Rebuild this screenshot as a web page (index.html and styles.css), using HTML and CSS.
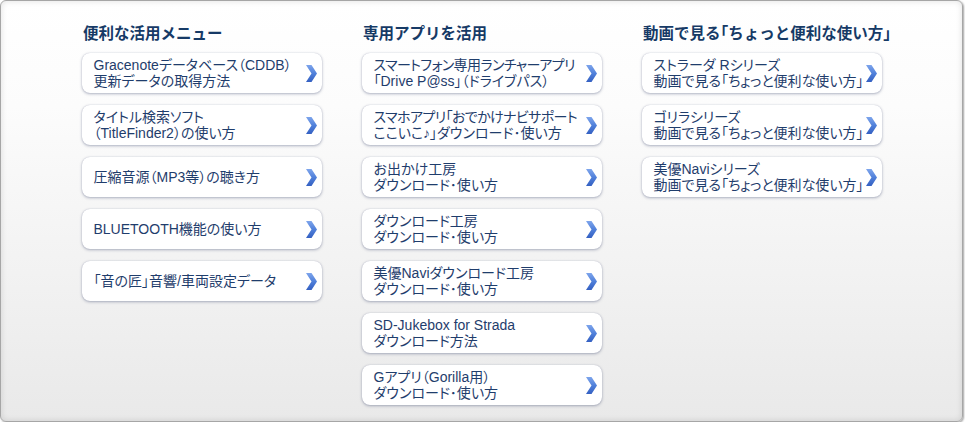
FILE: index.html
```html
<!DOCTYPE html>
<html lang="ja">
<head>
<meta charset="utf-8">
<title>メニュー</title>
<link rel="stylesheet" href="styles.css">
</head>
<body>
<svg width="0" height="0" class="defs" aria-hidden="true">
  <defs>
    <linearGradient id="chev" x1="0" y1="0" x2="0" y2="1">
      <stop offset="0" stop-color="#7ea5ec"/>
      <stop offset="0.5" stop-color="#5080da"/>
      <stop offset="1" stop-color="#3460c2"/>
    </linearGradient>
  </defs>
</svg>
<div class="panel">
  <section class="col">
    <h2 class="col-title">便利な活用メニュー</h2>
    <ul class="links">
      <li><a class="btn" href="#"><span class="label">Gracenoteデータベース（CDDB）<br>更新データの取得方法</span><svg class="chevron" viewBox="0 0 11 17"><path d="M0 0H5.5L11 8.5L5.5 17H0L5.5 8.5Z" fill="url(#chev)"/></svg></a></li>
      <li><a class="btn" href="#"><span class="label">タイトル検索ソフト<br>（TitleFinder2）の使い方</span><svg class="chevron" viewBox="0 0 11 17"><path d="M0 0H5.5L11 8.5L5.5 17H0L5.5 8.5Z" fill="url(#chev)"/></svg></a></li>
      <li><a class="btn" href="#"><span class="label">圧縮音源（MP3等）の聴き方</span><svg class="chevron" viewBox="0 0 11 17"><path d="M0 0H5.5L11 8.5L5.5 17H0L5.5 8.5Z" fill="url(#chev)"/></svg></a></li>
      <li><a class="btn" href="#"><span class="label">BLUETOOTH機能の使い方</span><svg class="chevron" viewBox="0 0 11 17"><path d="M0 0H5.5L11 8.5L5.5 17H0L5.5 8.5Z" fill="url(#chev)"/></svg></a></li>
      <li><a class="btn" href="#"><span class="label">「音の匠」音響/車両設定データ</span><svg class="chevron" viewBox="0 0 11 17"><path d="M0 0H5.5L11 8.5L5.5 17H0L5.5 8.5Z" fill="url(#chev)"/></svg></a></li>
    </ul>
  </section>
  <section class="col">
    <h2 class="col-title">専用アプリを活用</h2>
    <ul class="links">
      <li><a class="btn" href="#"><span class="label"><span class="tight">スマートフォン専用ランチャーアプリ</span><br>「Drive P@ss」（ドライブパス）</span><svg class="chevron" viewBox="0 0 11 17"><path d="M0 0H5.5L11 8.5L5.5 17H0L5.5 8.5Z" fill="url(#chev)"/></svg></a></li>
      <li><a class="btn" href="#"><span class="label"><span class="tight">スマホアプリ「おでかけナビサポート</span><br>ここいこ♪」ダウンロード･使い方</span><svg class="chevron" viewBox="0 0 11 17"><path d="M0 0H5.5L11 8.5L5.5 17H0L5.5 8.5Z" fill="url(#chev)"/></svg></a></li>
      <li><a class="btn" href="#"><span class="label">お出かけ工房<br>ダウンロード･使い方</span><svg class="chevron" viewBox="0 0 11 17"><path d="M0 0H5.5L11 8.5L5.5 17H0L5.5 8.5Z" fill="url(#chev)"/></svg></a></li>
      <li><a class="btn" href="#"><span class="label">ダウンロード工房<br>ダウンロード･使い方</span><svg class="chevron" viewBox="0 0 11 17"><path d="M0 0H5.5L11 8.5L5.5 17H0L5.5 8.5Z" fill="url(#chev)"/></svg></a></li>
      <li><a class="btn" href="#"><span class="label">美優Naviダウンロード工房<br>ダウンロード･使い方</span><svg class="chevron" viewBox="0 0 11 17"><path d="M0 0H5.5L11 8.5L5.5 17H0L5.5 8.5Z" fill="url(#chev)"/></svg></a></li>
      <li><a class="btn" href="#"><span class="label">SD-Jukebox for Strada<br>ダウンロード方法</span><svg class="chevron" viewBox="0 0 11 17"><path d="M0 0H5.5L11 8.5L5.5 17H0L5.5 8.5Z" fill="url(#chev)"/></svg></a></li>
      <li><a class="btn" href="#"><span class="label">Gアプリ（Gorilla用）<br>ダウンロード･使い方</span><svg class="chevron" viewBox="0 0 11 17"><path d="M0 0H5.5L11 8.5L5.5 17H0L5.5 8.5Z" fill="url(#chev)"/></svg></a></li>
    </ul>
  </section>
  <section class="col">
    <h2 class="col-title">動画で見る「ちょっと便利な使い方」</h2>
    <ul class="links">
      <li><a class="btn" href="#"><span class="label">ストラーダ Rシリーズ<br>動画で見る「ちょっと便利な使い方」</span><svg class="chevron" viewBox="0 0 11 17"><path d="M0 0H5.5L11 8.5L5.5 17H0L5.5 8.5Z" fill="url(#chev)"/></svg></a></li>
      <li><a class="btn" href="#"><span class="label">ゴリラシリーズ<br>動画で見る「ちょっと便利な使い方」</span><svg class="chevron" viewBox="0 0 11 17"><path d="M0 0H5.5L11 8.5L5.5 17H0L5.5 8.5Z" fill="url(#chev)"/></svg></a></li>
      <li><a class="btn" href="#"><span class="label">美優Naviシリーズ<br>動画で見る「ちょっと便利な使い方」</span><svg class="chevron" viewBox="0 0 11 17"><path d="M0 0H5.5L11 8.5L5.5 17H0L5.5 8.5Z" fill="url(#chev)"/></svg></a></li>
    </ul>
  </section>
</div>
</body>
</html>
```
FILE: styles.css
```css
* { box-sizing: border-box; }
html, body { margin: 0; padding: 0; background: #ffffff; }
body {
  font-family: "Liberation Sans", "Noto Sans CJK JP", sans-serif;
  color: #1f3d6c;
}
.defs { position: absolute; width: 0; height: 0; }
.panel {
  width: 963px;
  height: 422px;
  border: 1px solid #a6a6a6;
  border-radius: 6px;
  background: linear-gradient(#ffffff 0%, #fcfcfc 25%, #e9e9e9 100%);
  box-shadow: 1px 1px 2px rgba(0,0,0,0.35), inset 0 0 6px rgba(0,0,0,0.12);
  display: grid;
  grid-template-columns: 240px 240px 240px;
  column-gap: 40px;
  padding: 21px 0 0 81px;
  align-items: start;
}
.col { display: flex; flex-direction: column; }
.col-title {
  margin: 0 0 11px 1px;
  font-family: "Noto Sans CJK JP", sans-serif;
  font-size: 15.5px;
  line-height: 20px;
  font-weight: 700;
  color: #163a66;
  white-space: nowrap;
  font-feature-settings: "halt";
}
.links {
  list-style: none;
  margin: 0;
  padding: 0;
  display: flex;
  flex-direction: column;
  gap: 12px;
}
.btn {
  height: 40px;
  display: flex;
  align-items: center;
  justify-content: space-between;
  padding: 0 5px 0 11.5px;
  background: #ffffff;
  border-radius: 8px;
  box-shadow: 0 1px 3px rgba(35,45,90,0.35), 0 0 1px rgba(35,45,90,0.25);
  text-decoration: none;
  color: #1f3d6c;
}
.label {
  font-size: 14px;
  line-height: 16px;
  white-space: nowrap;
  font-feature-settings: "palt";
}
.tight { letter-spacing: -0.6px; }
.chevron { width: 11px; height: 17px; flex: none; }
```
